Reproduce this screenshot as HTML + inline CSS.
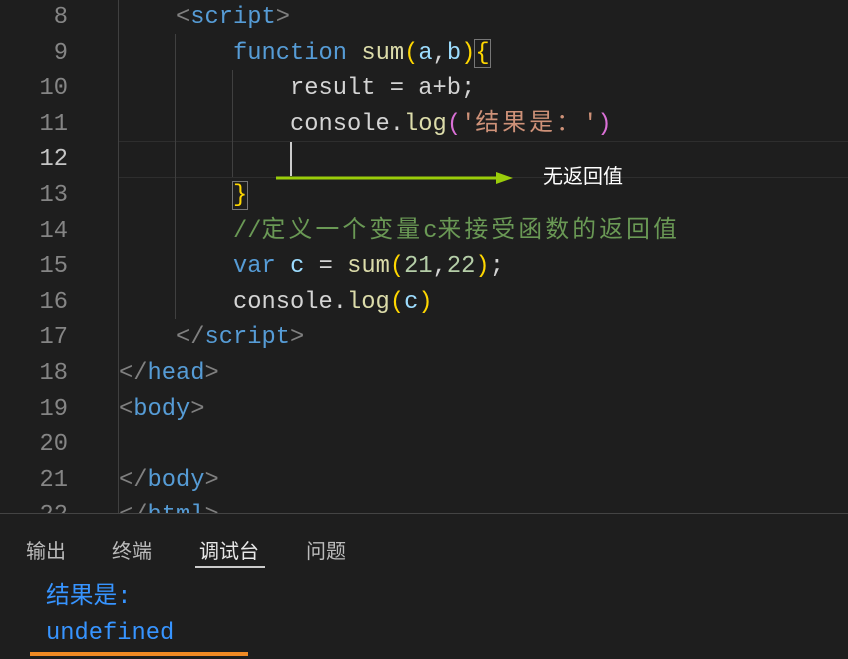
<!DOCTYPE html><html><head><meta charset="utf-8"><style>
body{margin:0;width:848px;height:659px;background:#1e1e1e;overflow:hidden;position:relative;font-family:"Liberation Mono","Noto Sans CJK SC",monospace;}
.ln{position:absolute;left:0;width:68px;text-align:right;color:#858585;font-size:23.75px;line-height:35.6px}
.code{position:absolute;left:119px;color:#d4d4d4;font-size:23.75px;line-height:35.6px}
.l{height:35.6px;white-space:pre}
.g{position:absolute;width:1px;background:#404040}
.b{color:#808080}.t{color:#569cd6}.k{color:#569cd6}.f{color:#dcdcaa}.y{color:#ffd700}.p{color:#da70d6}.s{color:#ce9178}.c{color:#6a9955}.n{color:#b5cea8}.v{color:#9cdcfe}
.w{letter-spacing:3.2px}
.tab{position:absolute;top:535px;font-family:"Liberation Sans","Noto Sans CJK SC",sans-serif;font-size:20px;color:#bbb}
</style></head><body>
<div style="position:absolute;left:118px;right:0;top:141px;height:35px;border-top:1px solid #2e2e2e;border-bottom:1px solid #2e2e2e"></div>
<div class="g" style="left:118px;top:0;height:513px"></div>
<div class="g" style="left:175px;top:34px;height:285px"></div>
<div class="g" style="left:232px;top:70px;height:107px"></div>
<div class="ln" style="top:0px">8<br>9<br>10<br>11<br><span style="color:#c6c6c6">12</span><br>13<br>14<br>15<br>16<br>17<br>18<br>19<br>20<br>21<br>22</div>
<div class="code" style="top:0px"><div class="l">    <span class="b">&lt;</span><span class="t">script</span><span class="b">&gt;</span></div><div class="l">        <span class="k">function</span> <span class="f">sum</span><span class="y">(</span><span class="v">a</span>,<span class="v">b</span><span class="y">)</span><span class="y" style="outline:1px solid #777">{</span></div><div class="l">            result = a+b;</div><div class="l">            console.<span class="f">log</span><span class="p">(</span><span class="s">'<span class="w">结果是：</span>'</span><span class="p">)</span></div><div class="l"> </div><div class="l">        <span class="y" style="outline:1px solid #777">}</span></div><div class="l">        <span class="c">//<span class="w">定义一个变量</span>c<span class="w">来接受函数的返回值</span></span></div><div class="l">        <span class="k">var</span> <span class="v">c</span> = <span class="f">sum</span><span class="y">(</span><span class="n">21</span>,<span class="n">22</span><span class="y">)</span>;</div><div class="l">        console.<span class="f">log</span><span class="y">(</span><span class="v">c</span><span class="y">)</span></div><div class="l">    <span class="b">&lt;/</span><span class="t">script</span><span class="b">&gt;</span></div><div class="l"><span class="b">&lt;/</span><span class="t">head</span><span class="b">&gt;</span></div><div class="l"><span class="b">&lt;</span><span class="t">body</span><span class="b">&gt;</span></div><div class="l"> </div><div class="l"><span class="b">&lt;/</span><span class="t">body</span><span class="b">&gt;</span></div><div class="l"><span class="b">&lt;/</span><span class="t">html</span><span class="b">&gt;</span></div></div>
<div style="position:absolute;left:290px;top:142px;width:2px;height:34px;background:#ccc"></div>
<svg style="position:absolute;left:0;top:0" width="848" height="200"><line x1="276" y1="178" x2="500" y2="178" stroke="#9acd0a" stroke-width="3"/><polygon points="496,172 513,178 496,184" fill="#9acd0a"/></svg>
<div style="position:absolute;left:543px;top:160px;font-family:'Noto Sans CJK SC',sans-serif;font-size:20px;color:#fff">无返回值</div>
<div style="position:absolute;left:0;right:0;top:513px;bottom:0;background:#1e1e1e;border-top:1px solid #444"></div>
<div class="tab" style="left:26px">输出</div>
<div class="tab" style="left:112px">终端</div>
<div class="tab" style="left:199px;color:#e7e7e7">调试台</div>
<div class="tab" style="left:306px">问题</div>
<div style="position:absolute;left:195px;top:566px;width:70px;height:2px;background:#ccc"></div>
<div style="position:absolute;left:46px;top:580px;font-size:23.75px;line-height:36px;color:#3794ff">结果是:<br>undefined</div>
<div style="position:absolute;left:30px;top:652px;width:218px;height:4px;background:#f08a24"></div>
</body></html>
